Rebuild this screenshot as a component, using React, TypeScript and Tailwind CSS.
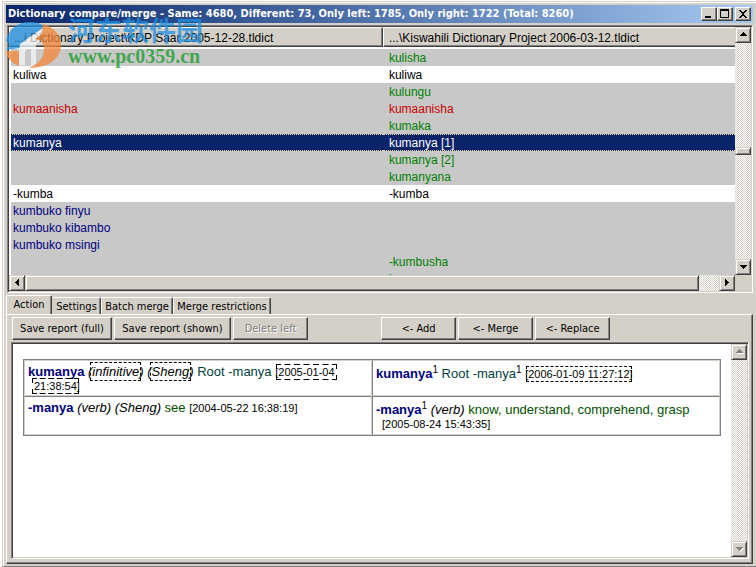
import React from "react";
import clsx from "clsx";

interface Entry {
  left?: string;
  right?: string;
  status: "same" | "different" | "left" | "right" | "selected";
}

const entries: Entry[] = [
  { right: "kulisha", status: "right" },
  { left: "kuliwa", right: "kuliwa", status: "same" },
  { right: "kulungu", status: "right" },
  { left: "kumaanisha", right: "kumaanisha", status: "different" },
  { right: "kumaka", status: "right" },
  { left: "kumanya", right: "kumanya [1]", status: "selected" },
  { right: "kumanya [2]", status: "right" },
  { right: "kumanyana", status: "right" },
  { left: "-kumba", right: "-kumba", status: "same" },
  { left: "kumbuko finyu", status: "left" },
  { left: "kumbuko kibambo", status: "left" },
  { left: "kumbuko msingi", status: "left" },
  { right: "-kumbusha", status: "right" },
  { right: "kumea", status: "right" },
];

const rowStyles = {
  same: "bg-white text-black",
  different: "bg-[#c8c8c8] text-[#c80000]",
  left: "bg-[#c8c8c8] text-[#000080]",
  right: "bg-[#c8c8c8] text-[#008000]",
  selected: "bg-[#0a246a] text-white",
};

const tabs = ["Action", "Settings", "Batch merge", "Merge restrictions"];

const track =
  "bg-[repeating-conic-gradient(#fff_0_25%,#d4d0c8_0_50%)] bg-[length:2px_2px]";
const raised =
  "bg-[#d4d0c8] border border-t-[#d4d0c8] border-l-[#d4d0c8] border-r-[#404040] border-b-[#404040] shadow-[inset_1px_1px_0_#fff,inset_-1px_-1px_0_#808080]";
const sunken =
  "border border-t-[#808080] border-l-[#808080] border-r-white border-b-white p-px shadow-[inset_1px_1px_0_#404040,inset_-1px_-1px_0_#d4d0c8]";

const arrows = {
  up: "M4 8h7v-1h-1v-1h-1v-1h-1v-1h-1v1h-1v1h-1v1h-1z",
  down: "M4 5h7v1h-1v1h-1v1h-1v1h-1v-1h-1v-1h-1v-1h-1z",
  left: "M9 3v7h-1v-1h-1v-1h-1v-1h-1v-1h1v-1h1v-1h1v-1z",
  right: "M5 3v7h1v-1h1v-1h1v-1h1v-1h-1v-1h-1v-1h-1v-1z",
};

interface ScrollButtonProps {
  direction: keyof typeof arrows;
  disabled?: boolean;
}

const ScrollButton: React.FC<ScrollButtonProps> = ({ direction, disabled }) => {
  return (
    <button
      type="button"
      aria-label={`Scroll ${direction}`}
      disabled={disabled}
      className={clsx("size-4 shrink-0", raised)}
    >
      <svg viewBox="0 0 14 14" className="size-full" shapeRendering="crispEdges">
        {disabled && (
          <path d={arrows[direction]} fill="#fff" transform="translate(1 1)" />
        )}
        <path d={arrows[direction]} fill={disabled ? "#808080" : "#000"} />
      </svg>
    </button>
  );
};

interface CaptionButtonProps {
  label: string;
  d: string;
  className?: string;
}

const CaptionButton: React.FC<CaptionButtonProps> = ({
  label,
  d,
  className,
}) => {
  return (
    <button
      type="button"
      aria-label={label}
      className={clsx(
        "w-4 h-3.5 bg-[#d4d0c8] border border-t-white border-l-white border-r-[#404040] border-b-[#404040] shadow-[inset_-1px_-1px_0_#808080]",
        className
      )}
    >
      <svg viewBox="0 0 14 12" className="size-full" shapeRendering="crispEdges">
        <path d={d} fill="#000" fillRule="evenodd" />
      </svg>
    </button>
  );
};

interface ToolButtonProps {
  className: string;
  disabled?: boolean;
  children: React.ReactNode;
}

const ToolButton: React.FC<ToolButtonProps> = ({
  className,
  disabled,
  children,
}) => {
  return (
    <button
      type="button"
      disabled={disabled}
      className={clsx(
        "h-[23px] pt-0.5 whitespace-nowrap border border-t-white border-l-white border-r-[#404040] border-b-[#404040] shadow-[inset_-1px_-1px_0_#808080] disabled:text-[#808080] disabled:[text-shadow:1px_1px_0_#fff]",
        className
      )}
    >
      {children}
    </button>
  );
};

const Changed: React.FC<{ children: React.ReactNode }> = ({ children }) => {
  return (
    <span className="outline outline-dashed outline-offset-1 outline-black">
      {children}
    </span>
  );
};

const Watermark: React.FC = () => {
  return (
    <div className="pointer-events-none absolute left-0.5 top-4 flex gap-1.5 opacity-75">
      <svg viewBox="0 0 57 50" className="mt-0.5 h-[50px] w-[57px]">
        <path
          d="M1 21C3 10 12 2 24 2c7 0 12 1 16 5L23 18l-8 10L1 30C4 27 6 24 1 21z"
          fill="#1e8fe0"
        />
        <path d="M15 24L38 8l5 8-12 8v20l-5 3V27l-6 4v14h-6V31z" fill="#f4f8fc" />
        <path
          d="M38 4c11 3 18 11 18 21 0 13-12 23-32 23 10-5 15-10 15-19 0-7-3-9-9-10 5-2 8-7 8-15z"
          fill="#f4873a"
        />
        <path d="M1 31h13v15C6 43 2 38 1 31z" fill="#f4873a" />
      </svg>
      <div>
        <div className="font-['Noto_Sans_CJK_SC',sans-serif] text-[27px] leading-6 font-bold text-[#1e8fe0]">
          河东软件园
        </div>
        <div className="mt-1 font-['Liberation_Serif',serif] text-[20px] leading-5 font-bold text-[#169a28]">
          www.pc0359.cn
        </div>
      </div>
    </div>
  );
};

const EntryList: React.FC = () => {
  return (
    <section className={clsx("ml-px flex flex-col", sunken)}>
      <div className="flex h-[248px]">
        <div className="flex-1 overflow-hidden bg-white">
          <table className="w-full table-fixed border-separate border-spacing-0 text-left font-['Liberation_Sans',sans-serif] text-[12px] leading-4">
            <thead>
              <tr className="h-5 bg-[#d4d0c8]">
                <th className="w-[51.5%] border border-t-white border-l-white border-r-[#404040] border-b-[#404040] p-0 pl-1 pt-0.5 font-normal shadow-[inset_-1px_-1px_0_#808080]">
                  ...i Dictionary Project\KDP Saar 2005-12-28.tldict
                </th>
                <th className="border border-r-0 border-t-white border-l-white border-b-[#404040] p-0 pl-[5px] pt-0.5 font-normal shadow-[inset_0_-1px_0_#808080]">
                  ...\Kiswahili Dictionary Project 2006-03-12.tldict
                </th>
              </tr>
            </thead>
            <tbody>
              <tr className="h-0.5">
                <td colSpan={2} className="p-0" />
              </tr>
              {entries.map((entry, index) => (
                <tr
                  key={index}
                  className={clsx("h-[17px]", rowStyles[entry.status])}
                >
                  {[entry.left, entry.right].map((word, column) => (
                    <td
                      key={column}
                      className={clsx(
                        "p-0",
                        column === 0
                          ? "border-l-2 border-l-white pl-0.5"
                          : "pl-1.5",
                        entry.status === "selected"
                          ? "border-y border-y-[#f5db95] [border-top-style:dotted] [border-bottom-style:dotted] pt-0.5 leading-[13px]"
                          : "pt-0.5 leading-[15px]"
                      )}
                    >
                      {word}
                    </td>
                  ))}
                </tr>
              ))}
            </tbody>
          </table>
        </div>
        <div className={clsx("flex w-4 flex-col", track)}>
          <ScrollButton direction="up" />
          <div className="flex-1" />
          <div className={clsx("h-2", raised)} />
          <div className="h-[104px]" />
          <ScrollButton direction="down" />
        </div>
      </div>
      <div className="flex h-4 pr-4">
        <div className={clsx("flex flex-1", track)}>
          <ScrollButton direction="left" />
          <div className={clsx("flex-1", raised)} />
          <div className="w-5" />
          <ScrollButton direction="right" />
        </div>
      </div>
    </section>
  );
};

const DetailTable: React.FC = () => {
  const cell =
    "border border-[#d4d0c8] pl-[9px] -indent-1.5 pr-2 align-top leading-[14px]";
  const stamp = "text-[11px] text-black";
  const head = "font-bold text-[#000080]";
  const sup = "text-[10px] leading-none";

  return (
    <table className="w-full table-fixed border-separate border-spacing-0 border border-[#808080] font-['Liberation_Sans',sans-serif] text-[13px]">
      <tbody>
        <tr className="h-9">
          <td className={clsx(cell, "pt-1")}>
            <b className={head}>kumanya</b>{" "}
            <i>
              (<Changed>infinitive</Changed>) (<Changed>Sheng</Changed>)
            </i>{" "}
            <span className="text-[#004040]">Root -manya</span>{" "}
            <span className={stamp}>
              [<Changed>2005-01-04 21:38:54</Changed>]
            </span>
          </td>
          <td className={clsx(cell, "border-l-[#808080] pt-1.5 pl-2")}>
            <b className={head}>kumanya</b>
            <sup className={sup}>1</sup>{" "}
            <span className="text-[#004040]">Root -manya</span>
            <sup className={sup}>1</sup>{" "}
            <span className={stamp}>
              [<Changed>2006-01-09 11:27:12</Changed>]
            </span>
          </td>
        </tr>
        <tr className="h-[39px]">
          <td className={clsx(cell, "border-t-[#808080] pt-1")}>
            <b className={head}>-manya</b> <i>(verb) (Sheng)</i>{" "}
            <span className="text-[#005000]">see</span>{" "}
            <span className={stamp}>[2004-05-22 16:38:19]</span>
          </td>
          <td
            className={clsx(
              cell,
              "border-l-[#808080] border-t-[#808080] pt-1.5 pl-2"
            )}
          >
            <b className={head}>-manya</b>
            <sup className={sup}>1</sup> <i>(verb)</i>{" "}
            <span className="text-[#005000]">
              know, understand, comprehend, grasp
            </span>{" "}
            <span className={stamp}>[2005-08-24 15:43:35]</span>
          </td>
        </tr>
      </tbody>
    </table>
  );
};

const App: React.FC = () => {
  return (
    <div className="h-screen min-h-[480px] bg-white pl-0.5 pt-px font-['DejaVu_Sans_Condensed','DejaVu_Sans',sans-serif] text-[11px] text-black">
      <main className="relative flex h-full flex-col border-l border-t border-b border-l-[#d4d0c8] border-t-[#d4d0c8] border-b-[#808080] bg-[#d4d0c8] pl-[3px] pr-[3px] pt-[3px] pb-0.5 shadow-[inset_1px_1px_0_#fff]">
        <header className="flex h-[18px] items-center bg-linear-to-r from-[#0a246a] to-[#a6caf0] px-0.5">
          <h1 className="flex-1 whitespace-nowrap font-bold text-white">
            Dictionary compare/merge - Same: 4680, Different: 73, Only left:
            1785, Only right: 1722 (Total: 8260)
          </h1>
          <CaptionButton label="Minimize" d="M3 8h6v2h-6z" />
          <CaptionButton
            label="Maximize"
            d="M2 1h9v9h-9zM3 3v6h7v-6z"
          />
          <CaptionButton
            label="Close"
            className="ml-0.5"
            d="M3 2h2v1h1v1h2v-1h1v-1h2v1h-1v1h-1v1h-1v2h1v1h1v1h1v1h-2v-1h-1v-1h-2v1h-1v1h-2v-1h1v-1h1v-1h1v-2h-1v-1h-1v-1h-1z"
          />
        </header>
        <div className="h-0.5 shrink-0" />
        <EntryList />
        <nav className="flex h-[21px] items-end pt-0.5">
          {tabs.map((tab, index) => (
            <button
              key={tab}
              type="button"
              className={clsx(
                "whitespace-nowrap rounded-t-xs border-t border-l border-r border-t-white border-r-[#404040] shadow-[inset_-1px_0_0_#808080]",
                index === 0 && "h-5 w-[46px] -mb-px border-l-white bg-[#d4d0c8] pb-px",
                index === 1 && "h-[17px] w-[49px] border-l-[#d4d0c8] pt-px",
                index === 2 && "h-[17px] w-[72px] border-l-white pt-px",
                index === 3 && "h-[17px] w-[98px] border-l-white pt-px"
              )}
            >
              {tab}
            </button>
          ))}
        </nav>
        <section className="flex min-h-0 flex-1 flex-col border border-t-white border-l-white border-r-[#404040] border-b-[#404040] pt-0.5 pl-1 pr-[3px] pb-1 shadow-[inset_-1px_-1px_0_#808080]">
          <div className="flex pl-px">
            <div className="flex gap-0.5">
              <ToolButton className="w-[100px]">Save report (full)</ToolButton>
              <ToolButton className="w-[117px]">Save report (shown)</ToolButton>
              <ToolButton className="w-[75px]" disabled>
                Delete left
              </ToolButton>
            </div>
            <div className="ml-[73px] flex gap-0.5">
              <ToolButton className="w-[75px]">&lt;- Add</ToolButton>
              <ToolButton className="w-[75px]">&lt;- Merge</ToolButton>
              <ToolButton className="w-[75px]">&lt;- Replace</ToolButton>
            </div>
          </div>
          <div className={clsx("mt-0.5 flex min-h-0 flex-1 bg-white", sunken)}>
            <div className="flex-1 overflow-hidden pl-2.5 pr-2.5 pt-[15px]">
              <DetailTable />
            </div>
            <div className={clsx("flex w-4 flex-col justify-between", track)}>
              <ScrollButton direction="up" disabled />
              <ScrollButton direction="down" disabled />
            </div>
          </div>
        </section>
        <Watermark />
      </main>
    </div>
  );
};

export default App;
